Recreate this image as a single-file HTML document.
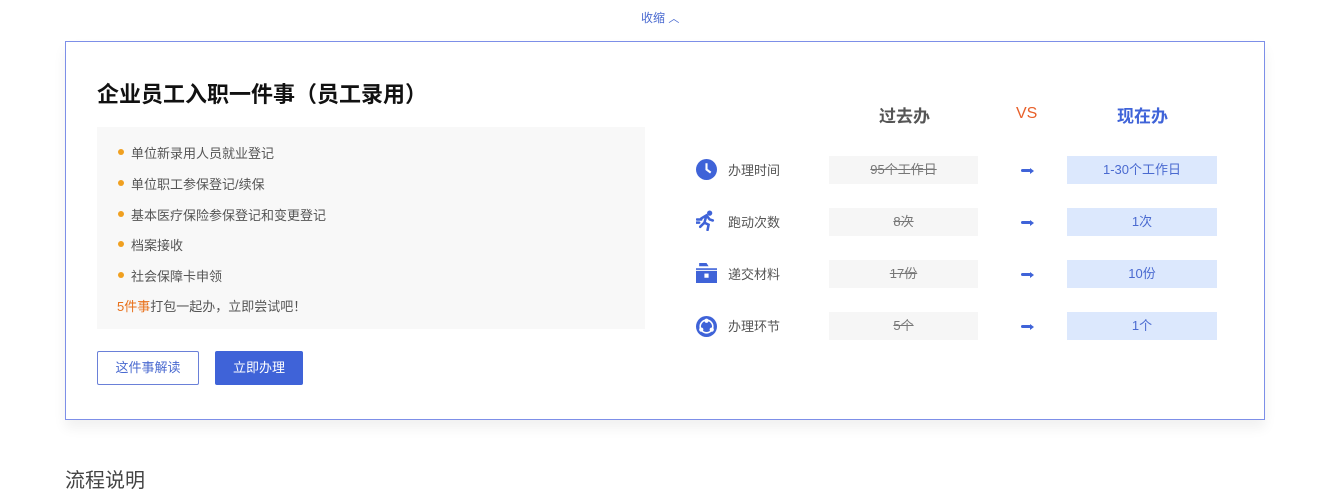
<!DOCTYPE html>
<html><head><meta charset="utf-8"><style>
*{margin:0;padding:0;box-sizing:border-box}
body{width:1340px;height:472px;background:#fff;font-family:"Liberation Sans","Noto Sans CJK SC",sans-serif;position:relative;overflow:hidden;color:#333}
.a{position:absolute}
.card{left:65px;top:41px;width:1200px;height:379px;border:1px solid #7d8fe8;box-shadow:0 8px 12px rgba(0,0,0,0.06)}
.li{left:118px;font-size:13px;color:#555}
.li:before{content:"";position:absolute;left:0;top:6px;width:6px;height:6px;border-radius:50%;background:#f0a020}
.li span{margin-left:13px}
.lab{left:728px;font-size:13px;color:#555}
.old{left:829px;width:149px;height:28px;background:#f6f6f6;text-align:center;line-height:28px;font-size:13px;color:#777;text-decoration:line-through}
.new{left:1067px;width:150px;height:28px;background:#dce8fd;text-align:center;line-height:28px;font-size:13px;color:#4a6ad0}
.arr{left:1021px;width:10px;height:3px;background:#3f63d8;border-radius:2px}
.arr:after{content:"";position:absolute;right:-3px;top:-1.5px;border-left:4px solid #3f63d8;border-top:3px solid transparent;border-bottom:3px solid transparent}
</style></head><body>
<div class="a" style="left:641px;top:9px;font-size:12px;color:#4a6ad0">收缩 <span style="font-size:11px">︿</span></div>
<div class="a card"></div>
<div class="a" style="left:97px;top:77px;font-size:22px;font-weight:bold;color:#111">企业员工入职一件事（员工录用）</div>
<div class="a" style="left:97px;top:127px;width:548px;height:202px;background:#f8f8f8"></div>
<div class="a li" style="top:143px"><span>单位新录用人员就业登记</span></div>
<div class="a li" style="top:174px"><span>单位职工参保登记/续保</span></div>
<div class="a li" style="top:205px"><span>基本医疗保险参保登记和变更登记</span></div>
<div class="a li" style="top:235px"><span>档案接收</span></div>
<div class="a li" style="top:266px"><span>社会保障卡申领</span></div>
<div class="a" style="left:117px;top:296px;font-size:13px;color:#555"><span style="color:#e8701a">5件事</span>打包一起办，立即尝试吧！</div>
<div class="a" style="left:97px;top:351px;width:102px;height:34px;border:1px solid #6a80d8;border-radius:2px;font-size:13px;color:#4a6ad0;text-align:center;line-height:32px">这件事解读</div>
<div class="a" style="left:215px;top:351px;width:88px;height:34px;background:#3f63d8;border-radius:2px;font-size:13px;color:#fff;text-align:center;line-height:34px">立即办理</div>
<div class="a" style="left:879px;top:102px;font-size:17px;font-weight:bold;color:#555">过去办</div>
<div class="a" style="left:1016px;top:106px;font-size:16px;line-height:16px;color:#e8602a">VS</div>
<div class="a" style="left:1117px;top:102px;font-size:17px;font-weight:bold;color:#3f63d8">现在办</div>

<svg class="a" style="left:696px;top:159px" width="21" height="21" viewBox="0 0 20 20"><circle cx="10" cy="10" r="10" fill="#3f63d8"/><path d="M10 4v6l4 3" stroke="#fff" stroke-width="2" fill="none"/></svg>
<div class="a lab" style="top:160px">办理时间</div>
<div class="a old" style="top:156px">95个工作日</div><div class="a arr" style="top:169px"></div><div class="a new" style="top:156px">1-30个工作日</div>

<svg class="a" style="left:696px;top:210px" width="21" height="21" viewBox="0 0 20 20"><circle cx="13" cy="3" r="2.5" fill="#3f63d8"/><path d="M5 8l5-3 3 4 3 1M10 5l-2 7 4 2-1 5M8 12l-4 4M1 9h4M0 12h3" stroke="#3f63d8" stroke-width="2.4" fill="none" stroke-linecap="round"/></svg>
<div class="a lab" style="top:212px">跑动次数</div>
<div class="a old" style="top:208px">8次</div><div class="a arr" style="top:221px"></div><div class="a new" style="top:208px">1次</div>

<svg class="a" style="left:696px;top:262px" width="21" height="21" viewBox="0 0 20 20"><path d="M0 6h20v14H0z" fill="#3f63d8"/><path d="M3 1h7l2 3H3z" fill="#3f63d8"/><rect x="8" y="11" width="4" height="4" fill="#fff"/><path d="M0 8h20" stroke="#fff"/></svg>
<div class="a lab" style="top:264px">递交材料</div>
<div class="a old" style="top:260px">17份</div><div class="a arr" style="top:273px"></div><div class="a new" style="top:260px">10份</div>

<svg class="a" style="left:696px;top:316px" width="21" height="21" viewBox="0 0 20 20"><circle cx="10" cy="10" r="10" fill="#3f63d8"/><circle cx="10" cy="10" r="6" fill="none" stroke="#fff" stroke-width="1.5"/><circle cx="10" cy="4.5" r="2" fill="#fff"/><circle cx="5" cy="13" r="2" fill="#fff"/><circle cx="15" cy="13" r="2" fill="#fff"/></svg>
<div class="a lab" style="top:316px">办理环节</div>
<div class="a old" style="top:312px">5个</div><div class="a arr" style="top:325px"></div><div class="a new" style="top:312px">1个</div>

<div class="a" style="left:65px;top:464px;font-size:20px;color:#444">流程说明</div>
</body></html>
